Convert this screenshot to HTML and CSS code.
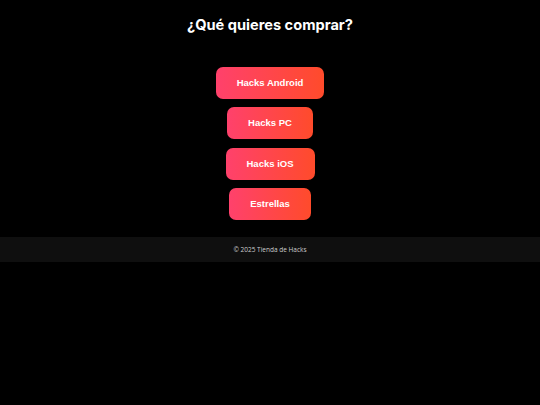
FILE: index.html
```html
<!DOCTYPE html>
<html lang="es">

<head>
  <meta charset="UTF-8" />
  <meta name="viewport" content="width=device-width, initial-scale=1.0" />
  <title>Tienda de Hacks</title>
  <link rel="stylesheet" href="styles.css">
</head>

<body>
  <header class="header">
    <h1>¿Qué quieres comprar?</h1>
  </header>

  <main class="menu">
    <a href="#" class="btn">Hacks Android</a>
    <a href="#" class="btn">Hacks PC</a>
    <a href="#" class="btn">Hacks iOS</a>
    <a href="#" class="btn">Estrellas</a>
  </main>

  <footer class="footer">
    <p>© 2025 Tienda de Hacks</p>
  </footer>
</body>

</html>
```

FILE: styles.css
```css
body {
  margin: 0;
  font-family: "Open Sans", Arial, sans-serif;
  background-color: #000;
  color: #fff;
}

.header {
  padding: 15px 0 0;
  text-align: center;
}

.header h1 {
  margin: 0;
  font-family: Inter, "Open Sans", sans-serif;
  font-size: 14.6px;
  font-weight: 700;
  line-height: 20px;
}

.menu {
  display: flex;
  flex-direction: column;
  align-items: center;
  gap: 8.33px;
  padding: 32px 0 17px;
}

.btn {
  display: block;
  height: 32px;
  line-height: 32px;
  padding: 0 21px;
  background: linear-gradient(to right, #ff416c, #ff4b2b);
  color: #fff;
  font-family: "Liberation Sans", Arial, sans-serif;
  font-size: 9.5px;
  font-weight: bold;
  text-decoration: none;
  border-radius: 7px;
}

.footer {
  background-color: #0f0f0f;
  text-align: center;
}

.footer p {
  margin: 0;
  height: 25px;
  line-height: 25px;
  font-size: 6.5px;
  color: #ccc;
}
```
